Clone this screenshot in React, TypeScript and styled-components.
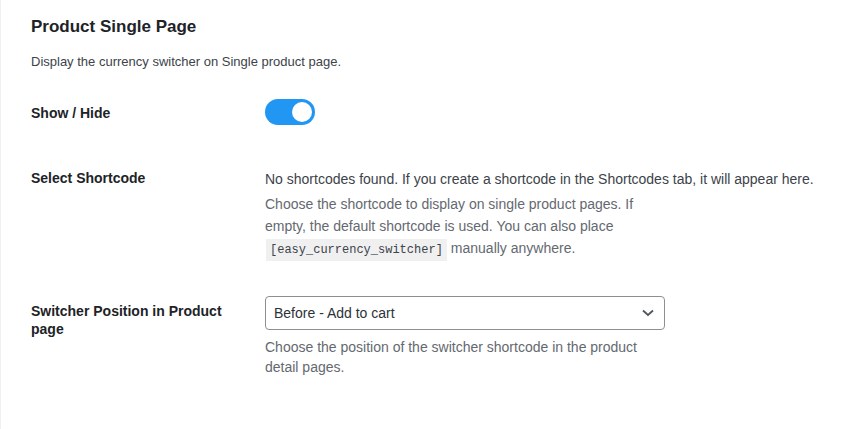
import React, { useState } from "react";
import styled, { createGlobalStyle } from "styled-components";

const GlobalStyle = createGlobalStyle`
	html, body {
		margin: 0;
		padding: 0;
		background: #f0f0f1;
	}
	body {
		font-family: "Liberation Sans", Arial, sans-serif;
		color: #3c434a;
		font-size: 13px;
	}
`;

const Panel = styled.div`
	margin-left: 1px;
	min-height: 429px;
	background: #ffffff;
	padding: 16px 30px 0;
	box-sizing: border-box;
`;

const Title = styled.h2`
	margin: 0;
	font-size: 17px;
	font-weight: 600;
	line-height: 22px;
	color: #1d2327;
`;

const Intro = styled.p`
	margin: 14px 0 0;
	font-size: 13px;
	line-height: 20px;
	color: #3c434a;
`;

const Table = styled.div`
	margin-top: 12px;
	display: flex;
	flex-direction: column;
`;

const Row = styled.div<{ $pad: number }>`
	display: grid;
	grid-template-columns: 234px 1fr;
	padding-bottom: ${({ $pad }) => $pad}px;
`;

const Label = styled.div<{ $top: number }>`
	max-width: 196px;
	padding-top: ${({ $top }) => $top}px;
	font-size: 14px;
	font-weight: 600;
	line-height: 18px;
	color: #1d2327;
`;

const Field = styled.div<{ $top: number }>`
	padding-top: ${({ $top }) => $top}px;
`;

const Track = styled.button<{ $on: boolean }>`
	position: relative;
	width: 50px;
	height: 26px;
	padding: 0;
	border: none;
	border-radius: 13px;
	cursor: pointer;
	background: ${({ $on }) => ($on ? "#2196f3" : "#c3c4c7")};
	display: block;
`;

const Knob = styled.span<{ $on: boolean }>`
	position: absolute;
	top: 3px;
	left: ${({ $on }) => ($on ? "27px" : "3px")};
	width: 20px;
	height: 20px;
	border-radius: 50%;
	background: #ffffff;
	transition: left 0.2s;
`;

const Notice = styled.p`
	margin: 0;
	font-size: 14px;
	line-height: 20px;
	color: #3c434a;
`;

const Description = styled.p<{ $lh: number; $mt: number }>`
	margin: ${({ $mt }) => $mt}px 0 0;
	max-width: 400px;
	font-size: 14px;
	line-height: ${({ $lh }) => $lh}px;
	color: #646970;
`;

const Code = styled.code`
	display: inline-block;
	padding: 2px 4px 2px;
	margin: 0 4px 0 1px;
	background: #f0f0f1;
	font-family: "Liberation Mono", Consolas, monospace;
	font-size: 12px;
	line-height: 18px;
	color: #3c434a;
`;

const SelectBox = styled.div`
	position: relative;
	width: 400px;
	height: 34px;
	box-sizing: border-box;
	border: 1px solid #8c8f94;
	border-radius: 4px;
	display: flex;
	align-items: center;
	padding: 0 24px 0 8px;
	font-size: 14px;
	color: #2c3338;
`;

const Chevron = styled.svg`
	position: absolute;
	right: 9px;
	top: 11px;
`;

const App: React.FunctionComponent = () => {
	const [on, setOn] = useState(true);

	return (
		<>
			<GlobalStyle />
			<Panel>
				<Title>Product Single Page</Title>
				<Intro>Display the currency switcher on Single product page.</Intro>

				<Table>
					<Row $pad={23}>
						<Label $top={20}>Show / Hide</Label>
						<Field $top={15}>
							<Track $on={on} onClick={() => setOn(!on)} aria-label="Show / Hide">
								<Knob $on={on} />
							</Track>
						</Field>
					</Row>

					<Row $pad={22}>
						<Label $top={21}>Select Shortcode</Label>
						<Field $top={21}>
							<Notice>
								No shortcodes found. If you create a shortcode in the Shortcodes tab, it will appear here.
							</Notice>
							<Description $lh={22} $mt={4}>
								Choose the shortcode to display on single product pages. If empty, the default
								shortcode is used. You can also place <Code>[easy_currency_switcher]</Code>
								manually anywhere.
							</Description>
						</Field>
					</Row>

					<Row $pad={0}>
						<Label $top={19}>Switcher Position in Product page</Label>
						<Field $top={13}>
							<SelectBox>
								Before - Add to cart
								<Chevron width="14" height="10" viewBox="0 0 14 10">
									<path d="M2 2.5 L7 7 L12 2.5" fill="none" stroke="#50575e" strokeWidth="1.8" />
								</Chevron>
							</SelectBox>
							<Description $lh={20} $mt={7}>
								Choose the position of the switcher shortcode in the product detail pages.
							</Description>
						</Field>
					</Row>
				</Table>
			</Panel>
		</>
	);
};

export default App;
